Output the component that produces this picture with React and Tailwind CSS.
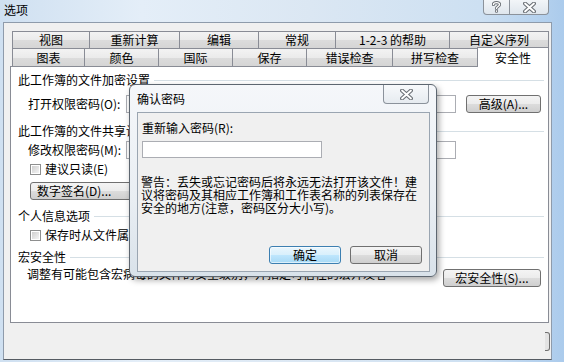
const TAB_ROW_1 = [
  { label: '视图', w: 'w-[77px]' },
  { label: '重新计算', w: 'w-[90px]' },
  { label: '编辑', w: 'w-[79px]' },
  { label: '常规', w: 'w-[77px]' },
  { label: '1-2-3 的帮助', w: 'w-[114px]' },
  { label: '自定义序列', w: 'w-[100px]' },
]

const TAB_ROW_2 = [
  { label: '图表', w: 'w-[72px]' },
  { label: '颜色', w: 'w-[74px]' },
  { label: '国际', w: 'w-[74px]' },
  { label: '保存', w: 'w-[74px]' },
  { label: '错误检查', w: 'w-[86px]' },
  { label: '拼写检查', w: 'w-[85px]' },
]

const BTN =
  'flex items-center justify-center rounded-[3px] border border-[#707070] bg-[linear-gradient(180deg,#f4f4f4_0%,#ececec_48%,#dcdcdc_52%,#cfcfcf_100%)] leading-[12px]'

export default function App() {
  return (
    <div className="relative flex h-[362px] w-[564px] flex-col overflow-hidden bg-[linear-gradient(90deg,#cfe0f1_0%,#e4eef8_25%,#dbe7f3_55%,#cde0f2_85%,#abcbec_100%)] font-['Noto_Sans_CJK_SC','Noto_Sans_CJK_JP',sans-serif] text-[12px] text-black">
      {/* title bar */}
      <div className="flex h-[22px] shrink-0">
        <span className="pl-[4px] pt-[3px] leading-[14px]">选项</span>
        <div className="ml-auto mr-[15px] flex h-[15px]">
          <div className="flex w-[27px] items-center justify-center rounded-bl-[4px] border border-t-0 border-[#8b929b] bg-[linear-gradient(180deg,#f2f5f8,#dfe6ed)]">
            <HelpGlyph />
          </div>
          <div className="flex w-[39px] items-center justify-center rounded-br-[4px] border border-l-0 border-t-0 border-[#8b929b] bg-[linear-gradient(180deg,#f2f5f8,#dfe6ed)]">
            <CloseGlyph />
          </div>
        </div>
      </div>

      {/* window body */}
      <div className="mb-[2px] ml-[3px] mr-[12px] flex flex-1 flex-col overflow-hidden border border-[#8e9bab] border-b-[#555b62] bg-[#f0f0f0]">
        <div className="pl-[8px] pr-[2px] pt-[8px]">
          <div className="flex h-[17px]">
            {TAB_ROW_1.map((tab, i) => (
              <Tab key={tab.label} {...tab} last={i === TAB_ROW_1.length - 1} />
            ))}
          </div>
          <div className="flex h-[18px] items-start">
            {TAB_ROW_2.map((tab) => (
              <Tab key={tab.label} {...tab} tall />
            ))}
            <div className="relative z-10 -mt-[1px] flex h-[20px] w-[72px] items-center justify-center border-x border-t border-[#898c95] bg-white pt-[1px] leading-[14px]">
              安全性
            </div>
          </div>
        </div>

        {/* security panel */}
        <div className="ml-[6px] mr-[2px] h-[257px] border border-[#898c95] bg-white pt-[6px]">
          <GroupHeader>此工作簿的文件加密设置</GroupHeader>
          <div className="mt-[7px] flex h-[19px] items-center pl-[17px]">
            <span className="leading-[14px]">打开权限密码(O):</span>
            <div className="ml-auto h-[18px] w-[330px] border border-[#abadb3] bg-white" />
            <div className={`${BTN} ml-[10px] mr-[7px] h-[18px] w-[75px]`}>高级(A)...</div>
          </div>

          <div className="mt-[11px]">
            <GroupHeader>此工作簿的文件共享设置</GroupHeader>
          </div>
          <div className="mt-[3px] flex h-[18px] items-center pl-[17px]">
            <span className="leading-[14px]">修改权限密码(M):</span>
            <div className="ml-auto mr-[92px] h-[18px] w-[330px] border border-[#abadb3] bg-white" />
          </div>
          <div className="mt-[3px] flex h-[14px] items-center gap-[4px] pl-[19px]">
            <CheckBox />
            <span className="leading-[14px]">建议只读(E)</span>
          </div>
          <div className={`${BTN} ml-[19px] mt-[6px] h-[18px] w-[112px] !justify-start pl-[6px]`}>
            数字签名(D)...
          </div>

          <div className="mt-[9px]">
            <GroupHeader>个人信息选项</GroupHeader>
          </div>
          <div className="mt-[5px] flex h-[14px] items-center gap-[4px] pl-[19px]">
            <CheckBox />
            <span className="leading-[14px]">保存时从文件属性中删除个人信息</span>
          </div>

          <div className="mt-[8px]">
            <GroupHeader>宏安全性</GroupHeader>
          </div>
          <div className="mt-[4px] flex items-start pl-[16px]">
            <span className="leading-[12px]">调整有可能包含宏病毒的文件的安全级别，并指定可信任的宏开发者</span>
            <div className={`${BTN} ml-auto mr-[7px] mt-[1px] h-[18px] w-[98px]`}>宏安全性(S)...</div>
          </div>
        </div>

        {/* bottom strip: clipped edge of a button */}
        <div className="flex justify-end pt-[9px]">
          <div className="mr-[1px] h-[19px] w-[5px] rounded-r-[3px] border-y border-r border-[#707070] bg-[#e3e3e3]" />
        </div>
      </div>

      {/* confirm password dialog */}
      <div className="absolute left-[129px] top-[84px] flex h-[193px] w-[308px] flex-col rounded-[6px] border border-[#5d6670] bg-[linear-gradient(180deg,#f5f7fa_0%,#e9eef3_60%,#d9e2ea_100%)] shadow-[2px_3px_6px_rgba(0,0,0,0.35)]">
        <div className="flex h-[27px] shrink-0 items-start">
          <span className="pl-[7px] pt-[7px] leading-[14px]">确认密码</span>
          <div className="ml-auto mr-[7px] flex h-[19px] w-[46px] items-center justify-center rounded-b-[4px] border border-t-0 border-[#8b929b] bg-[linear-gradient(180deg,#f7f9fb,#e6ebf0)]">
            <CloseGlyph />
          </div>
        </div>
        <div className="mb-[4px] ml-[7px] mr-[6px] flex flex-1 flex-col border border-[#9aa5b1] bg-[#f0f0f0] pl-[3px] pt-[8px]">
          <span className="ml-[1px] leading-[14px]">重新输入密码(R):</span>
          <div className="ml-[1px] mt-[6px] h-[17px] w-[180px] border border-[#abadb3] bg-white" />
          <p className="mt-[17px] leading-[13px]">
            警告：丢失或忘记密码后将永远无法打开该文件！建
            <br />
            议将密码及其相应工作簿和工作表名称的列表保存在
            <br />
            安全的地方(注意，密码区分大小写)。
          </p>
          <div className="mr-[7px] mt-[32px] flex justify-end gap-[9px]">
            <div className="flex h-[18px] w-[72px] items-center justify-center rounded-[3px] border border-[#3c7fb1] bg-[linear-gradient(180deg,#eaf6fd_0%,#d9f0fc_48%,#bee6fd_52%,#a7d9f5_100%)] leading-[12px] shadow-[inset_0_0_0_1px_rgba(255,255,255,0.6)]">
              确定
            </div>
            <div className={`${BTN} h-[18px] w-[72px]`}>取消</div>
          </div>
        </div>
      </div>
    </div>
  )
}

function Tab({ label, w, last, tall }) {
  return (
    <div
      className={`flex h-full ${w} items-center justify-center border-l border-t border-[#898c95] bg-[linear-gradient(180deg,#f3f3f3_0%,#ebebeb_50%,#dcdcdc_51%,#d5d5d5_100%)] leading-[14px] ${
        last ? 'border-r' : ''
      } ${tall ? 'pt-[1px]' : ''}`}
    >
      {label}
    </div>
  )
}

function GroupHeader({ children }) {
  return (
    <div className="flex h-[14px] items-center pl-[7px] pr-[4px]">
      <span className="leading-[14px]">{children}</span>
      <div className="ml-[4px] h-px flex-1 bg-[#d5dfe5]" />
    </div>
  )
}

function CheckBox() {
  return (
    <div className="h-[11px] w-[11px] shrink-0 border border-[#8e8f8f] bg-white p-[1px]">
      <div className="h-full w-full bg-[linear-gradient(135deg,#cfcfcf,#f4f4f4)]" />
    </div>
  )
}

function CloseGlyph() {
  return (
    <svg width="13" height="11" viewBox="0 0 13 11">
      <path d="M2 1.5 L11 9.5 M11 1.5 L2 9.5" stroke="#6a6f75" strokeWidth="4" strokeLinecap="round" />
      <path d="M2 1.5 L11 9.5 M11 1.5 L2 9.5" stroke="#ffffff" strokeWidth="1.8" strokeLinecap="round" />
    </svg>
  )
}

function HelpGlyph() {
  return (
    <svg width="9" height="12" viewBox="0 0 9 12">
      <path
        d="M1.5 3.5 C1.5 1 7.5 1 7.5 3.5 C7.5 5.5 4.5 5.5 4.5 7.5 M4.5 10 L4.5 10.2"
        fill="none"
        stroke="#6a6f75"
        strokeWidth="3.2"
        strokeLinecap="round"
      />
      <path
        d="M1.5 3.5 C1.5 1 7.5 1 7.5 3.5 C7.5 5.5 4.5 5.5 4.5 7.5 M4.5 10 L4.5 10.2"
        fill="none"
        stroke="#ffffff"
        strokeWidth="1.4"
        strokeLinecap="round"
      />
    </svg>
  )
}
